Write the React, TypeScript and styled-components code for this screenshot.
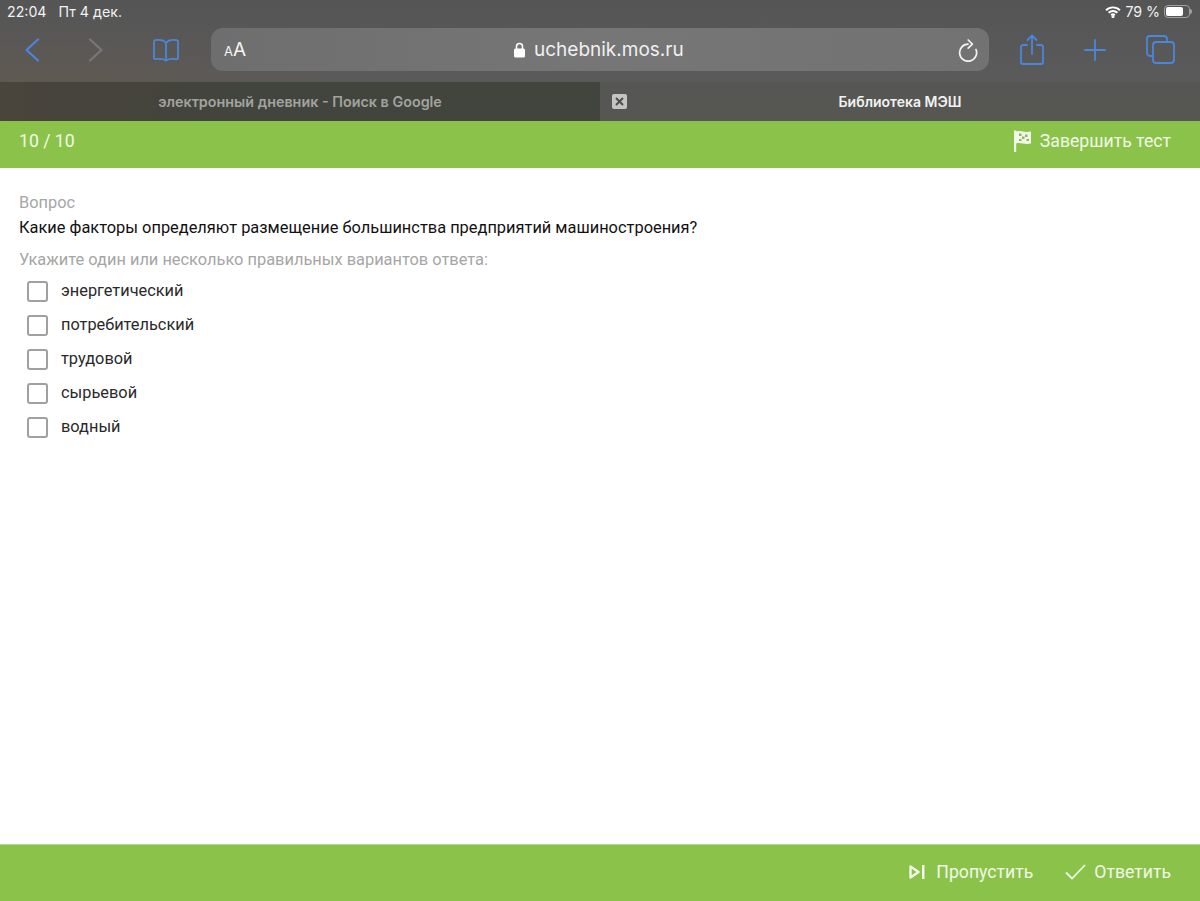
import React from "react";
import styled, { createGlobalStyle } from "styled-components";

const Global = createGlobalStyle`
  html, body { margin: 0; padding: 0; background: #fff; }
  #root { height: 901px; }
`;

const Page = styled.div`
  height: 901px;
  width: 1200px;
  display: flex;
  flex-direction: column;
  overflow: hidden;
  font-family: Roboto, "Liberation Sans", sans-serif;
`;

const Chrome = styled.header`
  height: 121px;
  flex: none;
  display: flex;
  flex-direction: column;
  background:
    radial-gradient(ellipse 300px 60px at 50px 82px, rgba(110, 85, 60, 0.28), rgba(110, 85, 60, 0) 100%),
    linear-gradient(180deg, #555555 0%, #5a5a5a 60%, #565653 100%);
`;

const StatusBar = styled.div`
  height: 28px;
  flex: none;
  padding: 0 10px 5px 7px;
  box-sizing: border-box;
  display: flex;
  align-items: center;
  justify-content: space-between;
  font-family: Inter, "Liberation Sans", sans-serif;
  font-size: 14.2px;
  color: #f2f2f2;
`;

const StatusGroup = styled.div<{ $gap: number }>`
  display: flex;
  align-items: center;
  gap: ${(p) => p.$gap}px;
`;

const Battery = styled.div`
  width: 26px;
  height: 13px;
  box-sizing: border-box;
  border: 1px solid #a0a0a0;
  border-radius: 4px;
  padding: 1px;
  position: relative;
  &::before {
    content: "";
    display: block;
    width: 79%;
    height: 100%;
    background: #fff;
    border-radius: 2px;
  }
  &::after {
    content: "";
    position: absolute;
    right: -3px;
    top: 3px;
    width: 2px;
    height: 5px;
    border-radius: 0 2px 2px 0;
    background: #a0a0a0;
  }
`;

const Toolbar = styled.div`
  height: 43px;
  flex: none;
  display: grid;
  grid-template-columns: 211px 778px 1fr;
  align-items: center;
`;

const ToolGroup = styled.div`
  display: flex;
  align-items: center;
  height: 100%;
`;

const IconSlot = styled.div<{ $w: number; $ml?: number }>`
  width: ${(p) => p.$w}px;
  margin-left: ${(p) => p.$ml ?? 0}px;
  flex: none;
  display: flex;
  justify-content: center;
  align-items: center;
`;

const UrlBar = styled.div`
  height: 43px;
  border-radius: 12px;
  background: linear-gradient(90deg, #6e6e6e, #767676 50%, #727272);
  display: flex;
  align-items: center;
  justify-content: space-between;
  padding: 0 11px 0 13px;
  position: relative;
`;

const TextSize = styled.span`
  font-family: Inter, "Liberation Sans", sans-serif;
  color: #f4f4f4;
  display: inline-flex;
  align-items: baseline;
  font-size: 19px;
  small {
    font-size: 13px;
  }
`;

const UrlText = styled.div`
  position: absolute;
  left: 303px;
  top: 0;
  height: 100%;
  display: flex;
  align-items: center;
  gap: 9px;
  font-family: Inter, "Liberation Sans", sans-serif;
  font-size: 19px;
  color: #f0f0f0;
`;

const Tabs = styled.div`
  margin-top: 11px;
  flex: 1;
  display: grid;
  grid-template-columns: 600px 600px;
`;

const Tab = styled.div<{ $active?: boolean }>`
  position: relative;
  display: flex;
  align-items: center;
  justify-content: center;
  font-family: Inter, "Liberation Sans", sans-serif;
  font-size: ${(p) => (p.$active ? "14px" : "14.35px")};
  font-weight: 600;
  color: ${(p) => (p.$active ? "#f2f2f2" : "#a2a39e")};
  background: ${(p) => (p.$active ? "#565752" : "linear-gradient(90deg, #49443c, #42443e 40%)")};
`;

const TabClose = styled.span`
  position: absolute;
  left: 12px;
  top: 12px;
  width: 15px;
  height: 15px;
  border-radius: 2px;
  background: #c4c4c2;
  display: flex;
  align-items: center;
  justify-content: center;
`;

const GreenBar = styled.div`
  flex: none;
  background: #8bc34a;
  display: flex;
  align-items: center;
  color: #f1f8e9;
  font-size: 17.65px;
  box-sizing: border-box;
`;

const TopBar = styled(GreenBar)`
  height: 47px;
  justify-content: space-between;
  padding: 0 29px 7px 19px;
`;

const BottomBar = styled(GreenBar)`
  height: 57px;
  margin-top: auto;
  justify-content: flex-end;
  padding: 0 29px 3px 0;
  gap: 32px;
  border-top: 1px solid #b4d98c;
`;

const BarAction = styled.div<{ $gap: number }>`
  display: flex;
  align-items: center;
  gap: ${(p) => p.$gap}px;
`;

const Content = styled.main`
  padding: 25px 19px 0;
  display: flex;
  flex-direction: column;
`;

const Muted = styled.div<{ $mt?: number }>`
  color: #a6a6a6;
  font-size: 16.4px;
  line-height: 19px;
  margin-top: ${(p) => p.$mt ?? 0}px;
`;

const Question = styled.div`
  color: #111;
  font-size: 16.4px;
  line-height: 19px;
  margin-top: 6px;
`;

const Options = styled.div`
  margin-top: 4px;
  padding-left: 8px;
  display: flex;
  flex-direction: column;
`;

const Option = styled.label`
  height: 34px;
  display: flex;
  align-items: center;
  gap: 13px;
  color: #2a2a2a;
  font-size: 16.35px;
`;

const Box = styled.span`
  width: 21px;
  height: 21px;
  box-sizing: border-box;
  border: 2.5px solid #a0a0a0;
  border-radius: 3px;
  background: #fff;
  margin-top: 2px;
`;

const Label = styled.span`
  margin-top: 0;
`;

const blue = "#4a86dc";

const options = ["энергетический", "потребительский", "трудовой", "сырьевой", "водный"];

export default function App() {
  return (
    <Page>
      <Global />
      <Chrome>
        <StatusBar>
          <StatusGroup $gap={12}>
            <span>22:04</span>
            <span>Пт 4 дек.</span>
          </StatusGroup>
          <StatusGroup $gap={4}>
            <svg width="16" height="12" viewBox="0 0 16 12" fill="none" stroke="#fff" strokeWidth="1.9">
              <path d="M1 4.200a10 10 0 0 1 14 0" />
              <path d="M3.600 6.800a6.300 6.300 0 0 1 8.800 0" />
              <path d="M6.200 9.200a2.600 2.600 0 0 1 3.600 0" />
              <circle cx="8" cy="10.600" r="0.600" fill="#fff" />
            </svg>
            <span>79 %</span>
            <Battery />
          </StatusGroup>
        </StatusBar>
        <Toolbar>
          <ToolGroup>
            <IconSlot $w={16} $ml={24}>
              <svg width="16" height="24" viewBox="0 0 16 24" fill="none" stroke={blue} strokeWidth="2.200" strokeLinecap="round" strokeLinejoin="round">
                <path d="M14 1.500 2.500 12 14 22.500" />
              </svg>
            </IconSlot>
            <IconSlot $w={16} $ml={48}>
              <svg width="16" height="24" viewBox="0 0 16 24" fill="none" stroke="#777" strokeWidth="2.200" strokeLinecap="round" strokeLinejoin="round">
                <path d="M2 1.500 13.500 12 2 22.500" />
              </svg>
            </IconSlot>
            <IconSlot $w={28} $ml={48}>
              <svg width="28" height="24" viewBox="0 0 28 24" fill="none" stroke={blue} strokeWidth="1.800" strokeLinejoin="round" strokeLinecap="round">
                <path d="M14 5C12 2.200 8 1.500 3 2.200L2 3v17.500l1 .7c5-.7 8.500-.4 11 1.300 2.500-1.700 6-2 11-1.300l1-.7V3l-1-.8C20 1.500 16 2.200 14 5Z" />
                <path d="M14 5v17.500" />
              </svg>
            </IconSlot>
          </ToolGroup>
          <UrlBar>
            <TextSize>
              <small>A</small>A
            </TextSize>
            <UrlText>
              <svg width="11" height="16" viewBox="0 0 11 16">
                <path d="M2.500 7V4.500a3 3 0 0 1 6 0V7" fill="none" stroke="#fff" strokeWidth="1.500" />
                <rect x="0" y="6.500" width="11" height="9" rx="1.500" fill="#fff" />
              </svg>
              <span>uchebnik.mos.ru</span>
            </UrlText>
            <svg width="20" height="24" viewBox="0 0 20 24" fill="none" stroke="#f2f2f2" strokeWidth="1.700" strokeLinecap="round" strokeLinejoin="round">
              <path d="M10 6.200A8.500 8.500 0 1 0 18 11.500" />
              <path d="M10.200 2 14.400 6.200 10.200 10.200" />
            </svg>
          </UrlBar>
          <ToolGroup>
            <IconSlot $w={24} $ml={31}>
              <svg width="24" height="32" viewBox="0 0 24 32" fill="none" stroke={blue} strokeWidth="1.800" strokeLinecap="round" strokeLinejoin="round">
                <path d="M7 11H3a2 2 0 0 0-2 2v15a2 2 0 0 0 2 2h18a2 2 0 0 0 2-2V13a2 2 0 0 0-2-2h-4" />
                <path d="M12 20V1.500M7.500 6 12 1.500 16.500 6" />
              </svg>
            </IconSlot>
            <IconSlot $w={22} $ml={40}>
              <svg width="22" height="22" viewBox="0 0 22 22" fill="none" stroke={blue} strokeWidth="1.800" strokeLinecap="round">
                <path d="M11 1v20M1 11h20" />
              </svg>
            </IconSlot>
            <IconSlot $w={29} $ml={40}>
              <svg width="29" height="29" viewBox="0 0 29 29" fill="none" stroke={blue} strokeWidth="1.800" strokeLinejoin="round">
                <path d="M6 21H4a3 3 0 0 1-3-3V4a3 3 0 0 1 3-3h14a3 3 0 0 1 3 3v2" />
                <rect x="7" y="7" width="21" height="21" rx="3" />
              </svg>
            </IconSlot>
          </ToolGroup>
        </Toolbar>
        <Tabs>
          <Tab>электронный дневник - Поиск в Google</Tab>
          <Tab $active>
            <TabClose>
              <svg width="9" height="9" viewBox="0 0 9 9" stroke="#4e4e4e" strokeWidth="2">
                <path d="M1 1l7 7M8 1 1 8" />
              </svg>
            </TabClose>
            Библиотека МЭШ
          </Tab>
        </Tabs>
      </Chrome>
      <TopBar>
        <span>10 / 10</span>
        <BarAction $gap={8}>
          <svg width="19" height="24" viewBox="0 0 19 24">
            <path d="M1 1.500h2.200v21.500H1z" fill="#f1f8e9" />
            <path d="M3 2.500c5-1.500 8 1.500 15 0v12c-7 1.500-10-1.500-15 0Z" fill="#f1f8e9" />
            <path d="M6 4.500h2.500v2.500H6zM12 5.500h2.500V8H12zM9 7.500h2.500v2.500H9zM6 10h2.500v2H6zM13.500 10h2.500v2h-2.500z" fill="#8fb85a" />
          </svg>
          Завершить тест
        </BarAction>
      </TopBar>
      <Content>
        <Muted>Вопрос</Muted>
        <Question>Какие факторы определяют размещение большинства предприятий машиностроения?</Question>
        <Muted $mt={13}>Укажите один или несколько правильных вариантов ответа:</Muted>
        <Options>
          {options.map((o) => (
            <Option key={o}>
              <Box />
              <Label>{o}</Label>
            </Option>
          ))}
        </Options>
      </Content>
      <BottomBar>
        <BarAction $gap={11}>
          <svg width="16" height="14" viewBox="0 0 16 14">
            <path d="M1.500 1.500 9.500 7l-8 5.500Z" fill="none" stroke="#f1f8e9" strokeWidth="2.400" strokeLinejoin="round" />
            <path d="M13 0h2.500v14H13z" fill="#f1f8e9" />
          </svg>
          Пропустить
        </BarAction>
        <BarAction $gap={8}>
          <svg width="21" height="16" viewBox="0 0 21 16" fill="none" stroke="#f1f8e9" strokeWidth="1.800">
            <path d="M1 8.500 7 14.500 20 1" />
          </svg>
          Ответить
        </BarAction>
      </BottomBar>
    </Page>
  );
}
